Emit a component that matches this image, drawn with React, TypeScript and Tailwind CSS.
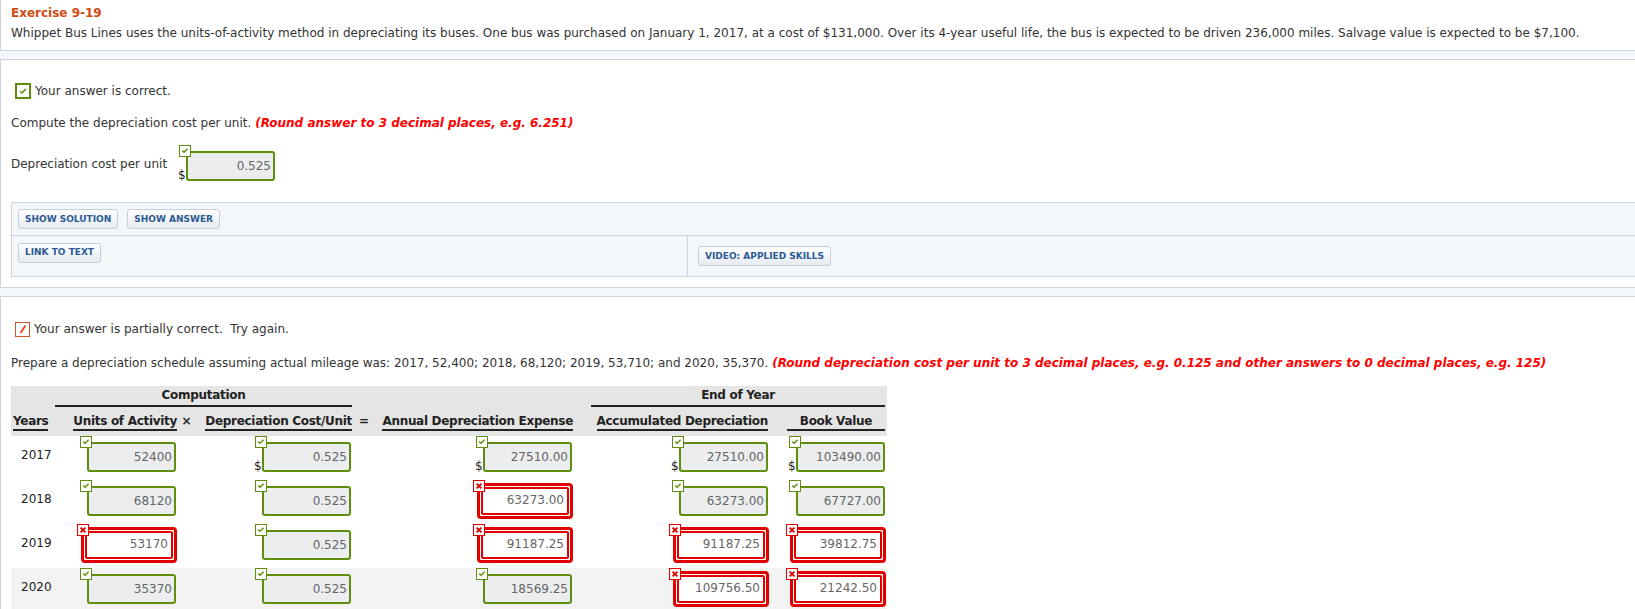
import type { ReactNode } from "react";

type Cell = { v: string; ok: boolean; usd?: boolean };

const ROWS: { year: string; cells: Cell[] }[] = [
  {
    year: "2017",
    cells: [
      { v: "52400", ok: true },
      { v: "0.525", ok: true, usd: true },
      { v: "27510.00", ok: true, usd: true },
      { v: "27510.00", ok: true, usd: true },
      { v: "103490.00", ok: true, usd: true },
    ],
  },
  {
    year: "2018",
    cells: [
      { v: "68120", ok: true },
      { v: "0.525", ok: true },
      { v: "63273.00", ok: false },
      { v: "63273.00", ok: true },
      { v: "67727.00", ok: true },
    ],
  },
  {
    year: "2019",
    cells: [
      { v: "53170", ok: false },
      { v: "0.525", ok: true },
      { v: "91187.25", ok: false },
      { v: "91187.25", ok: false },
      { v: "39812.75", ok: false },
    ],
  },
  {
    year: "2020",
    cells: [
      { v: "35370", ok: true },
      { v: "0.525", ok: true },
      { v: "18569.25", ok: true },
      { v: "109756.50", ok: false },
      { v: "21242.50", ok: false },
    ],
  },
];

const GRID =
  "grid grid-cols-[44px_122px_19px_156px_24px_197px_18px_177px_19px_98px_2px]";

function MiniCheck({ className }: { className?: string }) {
  return (
    <span
      className={`absolute flex h-[12px] w-[12px] items-center justify-center border border-[#5e8e0c] bg-white ${className ?? ""}`}
    >
      <svg width="10" height="10" viewBox="0 0 10 10">
        <path d="M2.2 4.6 L4 6.3 L7.6 2.8" fill="none" stroke="#5e8e0c" strokeWidth="1.4" />
      </svg>
    </span>
  );
}

function MiniCross({ className }: { className?: string }) {
  return (
    <span
      className={`absolute flex h-[12px] w-[12px] items-center justify-center border border-[#e00000] bg-white ${className ?? ""}`}
    >
      <svg width="10" height="10" viewBox="0 0 10 10">
        <path d="M2.6 2.6 L7.4 7.4 M7.4 2.6 L2.6 7.4" fill="none" stroke="#e00000" strokeWidth="1.8" />
      </svg>
    </span>
  );
}

function Field({ v, ok, usd }: Cell) {
  if (ok) {
    return (
      <div className="relative mt-[6px] h-[30px] w-[89px] rounded-[3px] border-2 border-[#5e8e0c] bg-[#ebedef] pr-[2px] text-right leading-[26px] text-[#666]">
        <MiniCheck className="-left-[9px] -top-[8px]" />
        {usd && <span className="absolute -bottom-[4px] -left-[10px] leading-[16px] text-[#222]">$</span>}
        {v}
      </div>
    );
  }
  return (
    <div className="relative mt-[3px] -mr-[1px] h-[36px] w-[96px] rounded-[4px] border-[3px] border-[#e00000] bg-white p-[1px]">
      <MiniCross className="-left-[7px] -top-[6px]" />
      <div className="h-full rounded-[2px] border-2 border-[#e00000] bg-white pr-[3px] text-right leading-[22px] text-[#666]">
        {v}
      </div>
    </div>
  );
}

function Btn({ children }: { children: ReactNode }) {
  return (
    <button className="h-[20px] rounded-[3px] border border-[#c5ced9] bg-linear-to-b from-white to-[#e6ebf1] px-[6px] text-[9px] leading-none font-bold text-[#2d5a94]">
      {children}
    </button>
  );
}

function Head({ children, className }: { children: ReactNode; className?: string }) {
  return (
    <div className={`flex ${className ?? "justify-end"}`}>
      <span className="inline-block border-b-2 border-[#222] leading-[16px] whitespace-nowrap">{children}</span>
    </div>
  );
}

export default function App() {
  return (
    <div className="h-[609px] w-[1635px] overflow-hidden bg-white font-['DejaVu_Sans',Verdana,sans-serif] text-[12px] text-[#333]">
      <section className="h-[50px] border-l border-[#cbd4df] pt-[5px] pl-[10px]">
        <div className="leading-[16px] font-bold text-[#d04a12]">Exercise 9-19</div>
        <p className="mt-[4px] leading-[16px] whitespace-nowrap">
          Whippet Bus Lines uses the units-of-activity method in depreciating its buses. One bus was purchased on January 1, 2017, at a cost of $131,000. Over its 4-year useful life, the bus is expected to be driven 236,000 miles. Salvage value is expected to be $7,100.
        </p>
      </section>
      <div className="h-[10px] border-y border-[#cbd4df] bg-[#f4f7fa]" />

      <section className="h-[227px] border-l border-[#cbd4df] pt-[23px] pl-[10px]">
        <div className="ml-[4px] flex items-center gap-[4px] leading-[16px]">
          <span className="flex h-[16px] w-[16px] items-center justify-center border-2 border-[#5e8e0c] bg-white">
            <svg width="12" height="12" viewBox="0 0 12 12">
              <path d="M3 6.2 L5 8 L9 3.8" fill="none" stroke="#5e8e0c" strokeWidth="1.5" />
            </svg>
          </span>
          Your answer is correct.
        </div>
        <p className="mt-[16px] leading-[16px]">
          Compute the depreciation cost per unit.{" "}
          <span className="font-bold text-[#f00] italic">(Round answer to 3 decimal places, e.g. 6.251)</span>
        </p>
        <div className="mt-[14px] flex items-center leading-[16px]">
          <span className="w-[175px]">Depreciation cost per unit</span>
          <div className="pb-[2px]">
            <Field v="0.525" ok usd />
          </div>
        </div>
        <div className="mt-[19px] border-y border-l border-[#cbd4df] bg-[#f4f7fa]">
          <div className="flex h-[33px] gap-[9px] border-b border-[#cbd4df] pt-[6px] pl-[6px]">
            <Btn>SHOW SOLUTION</Btn>
            <Btn>SHOW ANSWER</Btn>
          </div>
          <div className="flex h-[40px]">
            <div className="w-[675px] pt-[6px] pl-[6px]">
              <Btn>LINK TO TEXT</Btn>
            </div>
            <div className="flex flex-1 items-center border-l border-[#cbd4df] pl-[10px]">
              <Btn>VIDEO: APPLIED SKILLS</Btn>
            </div>
          </div>
        </div>
      </section>
      <div className="h-[10px] border-y border-[#cbd4df] bg-[#f4f7fa]" />

      <section className="border-l border-[#cbd4df] pt-[24px] pl-[10px]">
        <div className="ml-[4px] flex items-center gap-[4px] leading-[16px]">
          <span className="flex h-[15px] w-[15px] items-center justify-center border-[1.5px] border-[#d9532a] bg-white">
            <svg width="12" height="12" viewBox="0 0 12 12">
              <path d="M3.5 10 L8.5 2.5" fill="none" stroke="#e03a1a" strokeWidth="1.7" />
            </svg>
          </span>
          Your answer is partially correct.&nbsp; Try again.
        </div>
        <p className="mt-[18px] leading-[16px] whitespace-nowrap">
          Prepare a depreciation schedule assuming actual mileage was: 2017, 52,400; 2018, 68,120; 2019, 53,710; and 2020, 35,370.{" "}
          <span className="font-bold text-[#f00] italic">
            (Round depreciation cost per unit to 3 decimal places, e.g. 0.125 and other answers to 0 decimal places, e.g. 125)
          </span>
        </p>

        <div className="mt-[15px] w-[876px]">
          <div className="bg-[#e5e5e5] font-bold tracking-[-0.3px] text-[#222]">
            <div className={`${GRID} h-[21px] pt-[1px]`}>
              <div className="col-span-3 col-start-2 border-b-2 border-[#222] text-center leading-[16px]">
                Computation
              </div>
              <div className="col-span-3 col-start-8 border-b-2 border-[#222] text-center leading-[16px]">
                End of Year
              </div>
            </div>
            <div className={`${GRID} pt-[6px] pb-[5px]`}>
              <Head className="justify-start pl-[2px]">Years</Head>
              <Head>Units of Activity</Head>
              <div className="text-center leading-[16px]">×</div>
              <Head>Depreciation Cost/Unit</Head>
              <div className="text-center leading-[16px]">=</div>
              <Head>Annual Depreciation Expense</Head>
              <div />
              <Head>Accumulated Depreciation</Head>
              <div />
              <div className="border-b-2 border-[#222] text-center leading-[16px]">Book Value</div>
            </div>
          </div>

          {ROWS.map((r, i) => (
            <div key={r.year} className={`${GRID} h-[44px] ${i === 3 ? "bg-[#f3f3f3]" : ""}`}>
              <div className="pt-[11px] pl-[10px] leading-[16px] text-[#222]">{r.year}</div>
              <div className="flex justify-end pr-[1px]">
                <Field {...r.cells[0]} />
              </div>
              <div />
              <div className="flex justify-end pr-[1px]">
                <Field {...r.cells[1]} />
              </div>
              <div />
              <div className="flex justify-end pr-[1px]">
                <Field {...r.cells[2]} />
              </div>
              <div />
              <div className="flex justify-end">
                <Field {...r.cells[3]} />
              </div>
              <div />
              <div className="flex justify-end">
                <Field {...r.cells[4]} />
              </div>
              <div />
            </div>
          ))}
        </div>
      </section>
    </div>
  );
}
